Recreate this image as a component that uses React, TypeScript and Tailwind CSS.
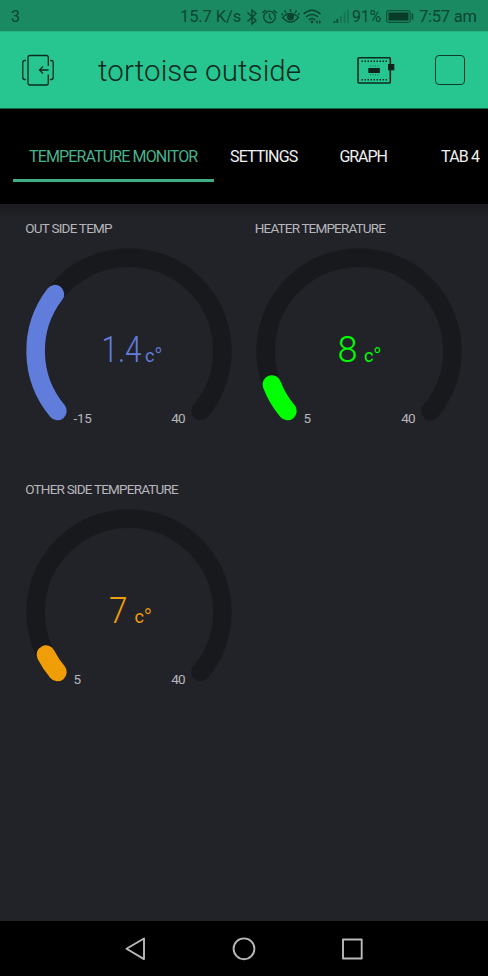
import React from "react";

const CX = 103;
const CY = 103;
const R = 93.4;

function point(deg: number) {
  const a = (deg * Math.PI) / 180;
  return `${(CX + R * Math.cos(a)).toFixed(2)} ${(CY + R * Math.sin(a)).toFixed(2)}`;
}

function arc(sweep: number) {
  return `M${point(140)} A${R} ${R} 0 ${sweep > 180 ? 1 : 0} 1 ${point(140 + sweep)}`;
}

type GaugeProps = {
  label: string;
  labelClass: string;
  color: string;
  sweep: number;
  value: string;
  valueX: number;
  valueWidth: number;
  unitX: number;
  min: string;
};

function Gauge({ label, labelClass, color, sweep, value, valueX, valueWidth, unitX, min }: GaugeProps) {
  return (
    <section className="h-[261px] w-[230px]">
      <h2 className={`h-[30px] -ml-px whitespace-nowrap text-[13.5px] leading-5 font-normal text-[#b6b6ba] ${labelClass}`}>{label}</h2>
      <svg width="206" height="182" viewBox="0 0 206 182" className="block overflow-visible">
        <path d={arc(260)} fill="none" stroke="#18191c" strokeWidth="18.6" strokeLinecap="round" />
        <path d={arc(sweep)} fill="none" stroke={color} strokeWidth="18.6" strokeLinecap="round" />
        <g fill={color}>
          <text x={valueX} y="114" fontSize="36" fontWeight="300" textLength={valueWidth} lengthAdjust="spacingAndGlyphs">{value}</text>
          <text x={unitX} y="114" fontSize="18">c<tspan fontSize="23" fontWeight="300" dy="3" dx="-0.5">°</tspan></text>
        </g>
        <g fill="#b6b6ba" fontSize="13.5">
          <text x="47.5" y="174.5" letterSpacing="-0.3">{min}</text>
          <text x="145.3" y="174.5" letterSpacing="-0.8">40</text>
        </g>
      </svg>
    </section>
  );
}

function StatusBar() {
  return (
    <div className="flex h-8 items-center border-b border-[#22b384] bg-[#1a8a62] pt-[3px] text-[16.5px] leading-none text-[#0b4632]">
      <span className="ml-[11px] w-[169px] text-[16px]">3</span>
      <span className="w-[66px] whitespace-nowrap tracking-[-0.1px]">15.7 K/s</span>
      <svg width="108" height="20" viewBox="246 7 108 20" fill="none" stroke="#0b4632" strokeWidth="1.4">
        <path d="M247.5 12.5l8.5 8-4 3.5V10l4 3.5-8.5 8" />
        <circle cx="269.5" cy="17" r="5.8" />
        <path d="M269.5 13.5v4l2.2 1.8M262.3 13l3.3-3M276.7 13l-3.3-3" />
        <path d="M282.5 17.5q8-8 16 0q-8 9-16 0z" />
        <circle cx="290.5" cy="17" r="2.8" fill="#0b4632" />
        <path d="M290.5 12v-3M286 13l-1.6-2.5M295 13l1.6-2.5M282.8 15l-1.2-1.7M298.2 15l1.2-1.7" />
        <path d="M303.5 14q8.5-7.5 17 0M306 17q6-5 12 0M308.7 20q3.3-3 6.6 0" strokeWidth="1.6" />
        <circle cx="312" cy="22" r="1.4" fill="#0b4632" stroke="none" />
        <path d="M315.5 22l2.2-2v4zM321.2 22l-2.2-2v4z" fill="#0b4632" stroke="none" />
        <path d="M334.5 23v-2M337.3 23v-4" strokeWidth="1.6" />
        <path d="M341 23v-7M344.5 23V12.5M348 23V9.5" stroke="#15724f" strokeWidth="1.6" />
      </svg>
      <span className="-ml-[2px] w-[34px] whitespace-nowrap text-[16px] tracking-[-0.3px]">91%</span>
      <svg width="28" height="14" viewBox="386 10 28 14" fill="none" stroke="#0b4632" strokeWidth="1">
        <rect x="386.7" y="10.7" width="23.5" height="11.6" rx="1.5" />
        <rect x="388.5" y="12.5" width="20" height="8" fill="#0a3c2b" stroke="none" />
        <path d="M412.5 13.5v6" strokeWidth="1.5" />
      </svg>
      <span className="ml-[5px] whitespace-nowrap tracking-[-0.25px]">7:57 am</span>
    </div>
  );
}

function Header() {
  return (
    <header className="flex h-[77px] items-center border-b border-[#17664b] bg-[#27c690] text-[#0c2a20]">
      <svg className="ml-[21px]" width="34" height="32" viewBox="21 54 34 32" fill="none" stroke="currentColor" strokeWidth="1.3">
        <path d="M48.3 66v-8.5q0-2-2-2H30q-2 0-2 2v25.5q0 2 2 2h16.3q2 0 2-2V74.5" />
        <path d="M48.5 70H39.5M43 66.5L39.5 70l3.5 3.5M25.8 60.5h-1q-2 0-2 2v15q0 2 2 2h1M50.2 60.5h1q2 0 2 2v15q0 2-2 2h-1" />
      </svg>
      <h1 className="ml-[43px] w-[259px] whitespace-nowrap pt-[3px] text-[29.5px] leading-none font-light tracking-[0.1px]">tortoise outside</h1>
      <svg width="39" height="30" viewBox="357 55 39 30" fill="none" stroke="currentColor">
        <rect x="358" y="57.7" width="32.3" height="25.3" rx="1" strokeWidth="1.6" />
        <path d="M361.5 61.2H387M361.5 79.8H387" strokeWidth="1.5" strokeDasharray="1.5 1.5" />
        <path d="M370 66h9M370 74.8h9" strokeWidth="1" strokeOpacity="0.6" strokeDasharray="1 1.5" />
        <rect x="368.3" y="68" width="11.6" height="5" fill="#10231c" stroke="none" />
        <rect x="388" y="64" width="6.3" height="6.3" fill="#10231c" stroke="none" />
      </svg>
      <span className="ml-[39px] h-[30px] w-[30px] rounded-[4px] border border-[#0c3c2c]" />
    </header>
  );
}

function Tabs() {
  return (
    <nav className="flex h-[95px] overflow-hidden bg-black pt-[31px] text-[16px] whitespace-nowrap text-[#f0f0f0]">
      <div className="ml-[13px] h-[42px] w-[201px] border-b-[3px] border-[#3fae86] pl-[16px] leading-[33px] tracking-[-0.86px] text-[#46b38d]">TEMPERATURE MONITOR</div>
      <div className="ml-[16px] w-[109.5px] leading-[33px] tracking-[-0.85px]">SETTINGS</div>
      <div className="w-[101.5px] leading-[33px] tracking-[-1.1px]">GRAPH</div>
      <div className="leading-[33px] tracking-[-0.8px]">TAB 4</div>
    </nav>
  );
}

export default function App() {
  return (
    <div className="flex h-[976px] w-[488px] flex-col overflow-hidden bg-[#222328] font-['Roboto','Liberation_Sans',sans-serif]">
      <StatusBar />
      <Header />
      <Tabs />
      <main className="grid flex-1 auto-rows-[261px] content-start grid-cols-[229.5px_230px] bg-[linear-gradient(#1a1a1d,#222328_14px)] pt-[14px] pl-[26.3px]">
        <Gauge label="OUT SIDE TEMP" labelClass="tracking-[-0.77px]" color="#617ddb" sweep={77.5} value="1.4" valueX={75.5} valueWidth={40} unitX={119} min="-15" />
        <Gauge label="HEATER TEMPERATURE" labelClass="tracking-[-0.83px]" color="#00ff00" sweep={19} value="8" valueX={81.5} valueWidth={20} unitX={108} min="5" />
        <Gauge label="OTHER SIDE TEMPERATURE" labelClass="tracking-[-0.8px]" color="#f09e07" sweep={12.8} value="7" valueX={83} valueWidth={18.5} unitX={108.5} min="5" />
      </main>
      <footer className="flex h-[55px] items-center bg-black">
        <svg className="ml-[124px]" width="240" height="26" viewBox="124 935.5 240 26" fill="none" stroke="#b9b9b9" strokeWidth="1.9" strokeLinejoin="round">
          <path d="M126.5 948.3L144 938v20.6z" />
          <circle cx="244" cy="948.3" r="10.4" />
          <rect x="343" y="939" width="18.7" height="19" />
        </svg>
      </footer>
    </div>
  );
}
